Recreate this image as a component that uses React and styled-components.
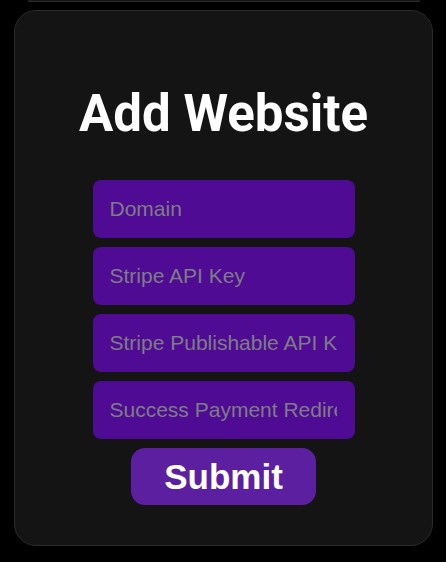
import styled, { createGlobalStyle } from 'styled-components';

const GlobalStyle = createGlobalStyle`
  html, body {
    margin: 0;
    padding: 0;
    background: #000000;
  }
  * {
    box-sizing: border-box;
  }
`;

const fields = [
  'Domain',
  'Stripe API Key',
  'Stripe Publishable API Key',
  'Success Payment Redirect URL',
];

const App = () => {
  return (
    <>
      <GlobalStyle />
      <Page>
        <PrevCard />
        <Card>
          <Title>Add Website</Title>
          <Form onSubmit={(e) => e.preventDefault()}>
            {fields.map((f) => (
              <Input key={f} placeholder={f} />
            ))}
            <SubmitButton type="submit">Submit</SubmitButton>
          </Form>
        </Card>
      </Page>
    </>
  );
};

export default App;

const Page = styled.div`
  width: 446px;
  height: 562px;
  overflow: hidden;
  display: flex;
  flex-direction: column;
`;

const PrevCard = styled.div`
  height: 2px;
  margin: 0 26px 0 28px;
  border: 1px solid #2c2c2c;
  border-top: none;
  border-radius: 0 0 10px 10px;
  background: #141414;
`;

const Card = styled.div`
  margin: 8px 0 0 14px;
  width: 419px;
  height: 536px;
  background: #141414;
  border: 1px solid #2a2a2a;
  border-radius: 22px;
  padding-top: 77px;
  display: flex;
  flex-direction: column;
  align-items: center;
`;

const Title = styled.h1`
  margin: 0 0 41px;
  font-family: Roboto, 'Liberation Sans', sans-serif;
  font-weight: 700;
  font-size: 51px;
  line-height: 1;
  color: #ffffff;
`;

const Form = styled.form`
  display: flex;
  flex-direction: column;
  align-items: center;
  gap: 9px;
`;

const Input = styled.input`
  width: 262px;
  height: 58px;
  padding: 0 18px 0 17px;
  border: none;
  outline: none;
  border-radius: 8px;
  background: #4f0b93;
  color: #ffffff;
  font-family: 'Liberation Sans', Arial, sans-serif;
  font-size: 21px;

  &::placeholder {
    color: #7e7c88;
  }
`;

const SubmitButton = styled.button`
  width: 185px;
  height: 57px;
  border: none;
  border-radius: 14px;
  background: #5b1fa0;
  color: #ffffff;
  font-family: 'Liberation Sans', Arial, sans-serif;
  font-weight: 700;
  font-size: 35px;
  cursor: pointer;
`;
